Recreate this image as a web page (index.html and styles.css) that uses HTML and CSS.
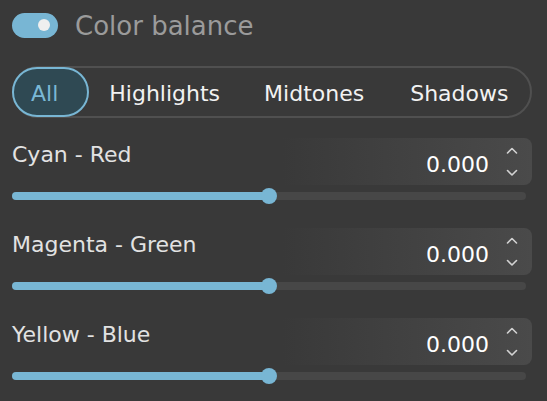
FILE: index.html
```html
<!DOCTYPE html>
<html>
<head>
<meta charset="utf-8">
<link rel="stylesheet" href="styles.css">
</head>
<body>
<div class="panel">
  <div class="header">
    <div class="toggle"><div class="knob"></div></div>
    <div class="title">Color balance</div>
  </div>
  <div class="segments">
    <div class="seg active">All</div>
    <div class="seg">Highlights</div>
    <div class="seg">Midtones</div>
    <div class="seg">Shadows</div>
  </div>

  <div class="row">
    <div class="field">
      <div class="label">Cyan - Red</div>
      <div class="value">0.000</div>
      <svg class="spin" width="12" height="32" viewBox="0 0 12 32"><polyline points="1.5,7 6,2.5 10.5,7"/><polyline points="1.5,24.5 6,29 10.5,24.5"/></svg>
    </div>
    <div class="slider"><div class="track"><div class="fill" style="width:50%"></div><div class="thumb" style="left:50%"></div></div></div>
  </div>

  <div class="row">
    <div class="field">
      <div class="label">Magenta - Green</div>
      <div class="value">0.000</div>
      <svg class="spin" width="12" height="32" viewBox="0 0 12 32"><polyline points="1.5,7 6,2.5 10.5,7"/><polyline points="1.5,24.5 6,29 10.5,24.5"/></svg>
    </div>
    <div class="slider"><div class="track"><div class="fill" style="width:50%"></div><div class="thumb" style="left:50%"></div></div></div>
  </div>

  <div class="row">
    <div class="field">
      <div class="label">Yellow - Blue</div>
      <div class="value">0.000</div>
      <svg class="spin" width="12" height="32" viewBox="0 0 12 32"><polyline points="1.5,7 6,2.5 10.5,7"/><polyline points="1.5,24.5 6,29 10.5,24.5"/></svg>
    </div>
    <div class="slider"><div class="track"><div class="fill" style="width:50%"></div><div class="thumb" style="left:50%"></div></div></div>
  </div>
</div>
</body>
</html>
```
FILE: styles.css
```css
html, body {
  margin: 0;
  padding: 0;
  background: #393939;
  font-family: "DejaVu Sans", "Noto Sans", sans-serif;
}
.panel {
  width: 520px;
  padding: 12px 15px 0 12px;
}
.header {
  display: flex;
  align-items: center;
  gap: 17px;
  height: 26px;
}
.toggle {
  width: 46px;
  height: 25px;
  border-radius: 13px;
  background: #78b6d4;
  display: flex;
  align-items: center;
  justify-content: flex-end;
  padding-right: 8px;
  box-sizing: border-box;
}
.knob {
  width: 12px;
  height: 12px;
  border-radius: 50%;
  background: #efefef;
}
.title {
  font-size: 26px;
  color: #9b9b9b;
  line-height: 26px;
  padding-top: 1px;
}
.segments {
  margin-top: 28px;
  height: 52px;
  box-sizing: border-box;
  border: 2px solid #505050;
  border-radius: 26px;
  display: flex;
}
.seg {
  display: flex;
  align-items: center;
  font-size: 22px;
  color: #f2f2f2;
  padding-top: 2px;
}
.seg:nth-child(2) { margin-left: 20px; }
.seg:nth-child(3) { margin-left: 44px; }
.seg:nth-child(4) { margin-left: 46px; }
.seg.active {
  margin: -1px 0 -1px -2px;
  border: 2px solid #78b6d4;
  border-radius: 26px;
  background: #2f4953;
  color: #7ab8d6;
  padding: 2px 29px 0 17px;
}
.row {
  margin-top: 20px;
}
.row + .row {
  margin-top: 24px;
}
.field {
  height: 47px;
  border-radius: 8px;
  background: linear-gradient(90deg, rgba(75,75,75,0) 52%, #4a4a4a 100%);
  display: flex;
  align-items: flex-start;
}
.label {
  font-size: 22px;
  line-height: 30px;
  color: #e2e2e2;
  padding-top: 2px;
  flex: 1;
}
.value {
  font-size: 22px;
  line-height: 30px;
  color: #ffffff;
  margin-top: 12px;
  margin-right: 17px;
}
.spin {
  margin-top: 8px;
  margin-right: 14px;
  fill: none;
  stroke: #d2d2d2;
  stroke-width: 1.6;
  stroke-linecap: round;
  stroke-linejoin: round;
}
.slider {
  margin-top: 3px;
  height: 16px;
  width: 514px;
  display: flex;
  align-items: center;
}
.track {
  position: relative;
  width: 100%;
  height: 8px;
  border-radius: 4px;
  background: #474747;
}
.fill {
  height: 100%;
  border-radius: 4px;
  background: #78b6d4;
}
.thumb {
  position: absolute;
  top: 50%;
  width: 16px;
  height: 16px;
  margin: -8px 0 0 -8px;
  border-radius: 50%;
  background: #78b6d4;
}
```
